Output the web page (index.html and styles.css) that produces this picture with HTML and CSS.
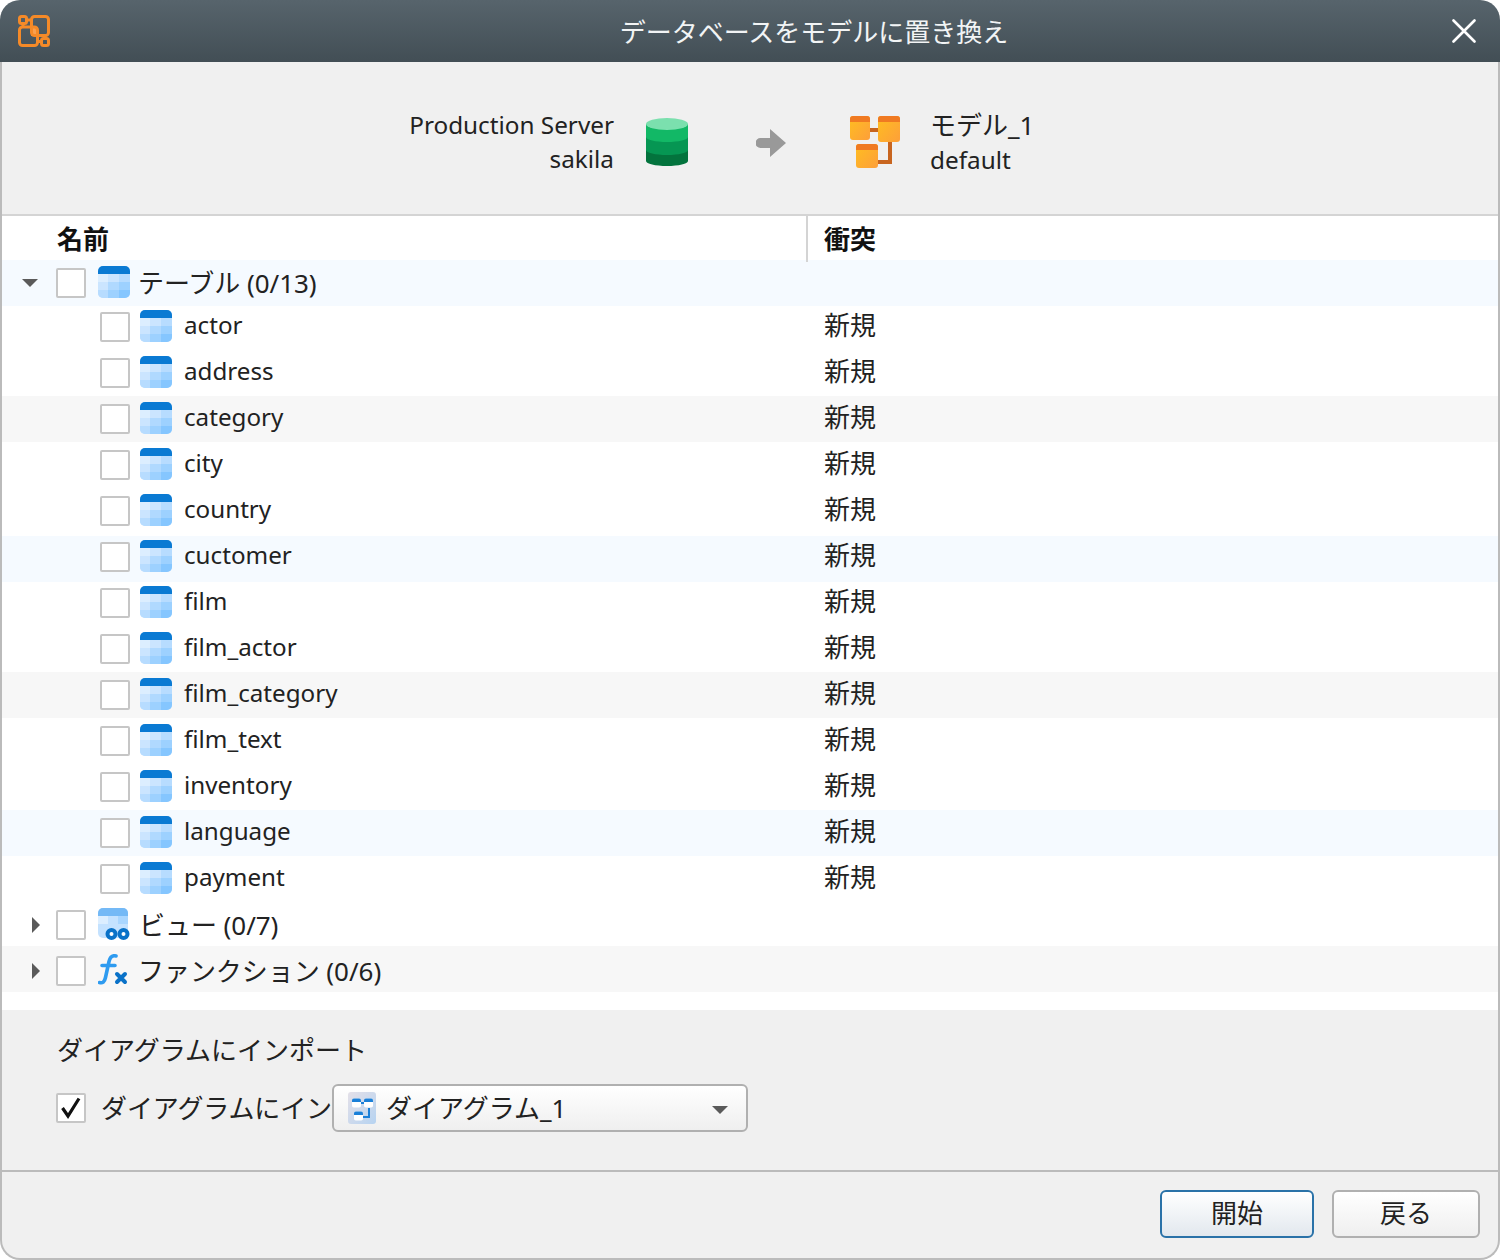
FILE: index.html
```html
<!DOCTYPE html>
<html lang="ja">
<head>
    <meta charset="UTF-8">
    <title>データベースをモデルに置き換え</title>
    <link rel="stylesheet" href="styles.css">
</head>
<body>
    <svg class="defs" width="0" height="0">
        <defs>
            <linearGradient id="gold" x1="0" y1="0" x2="1" y2="1">
                <stop offset="0" stop-color="#ffbe20"/>
                <stop offset="1" stop-color="#fd9f3a"/>
            </linearGradient>
            <clipPath id="tc"><rect width="32" height="32" rx="5"/></clipPath>
            <clipPath id="vc"><rect width="30" height="30" rx="5"/></clipPath>
            <symbol id="table" viewBox="0 0 32 32">
                <g clip-path="url(#tc)">
                    <rect width="32" height="32" fill="#c4e2ff"/>
                    <rect width="32" height="8" fill="#0a7ad3"/>
                    <rect y="8" width="10" height="8" fill="#dceeff"/>
                    <rect x="10" y="8" width="11" height="8" fill="#cbe5ff"/>
                    <rect x="21" y="8" width="11" height="8" fill="#b7dcff"/>
                    <rect y="16" width="10" height="8" fill="#cbe5ff"/>
                    <rect x="10" y="16" width="11" height="8" fill="#b0d9ff"/>
                    <rect x="21" y="16" width="11" height="8" fill="#9dd1ff"/>
                    <rect y="24" width="10" height="8" fill="#b7dcff"/>
                    <rect x="10" y="24" width="11" height="8" fill="#9dd1ff"/>
                    <rect x="21" y="24" width="11" height="8" fill="#85c6ff"/>
                </g>
            </symbol>
            <symbol id="mini" viewBox="0 0 10 10">
                <rect width="10" height="10" rx="2" fill="#fff"/>
                <path d="M0 4V2a2 2 0 0 1 2-2h6a2 2 0 0 1 2 2v2z" fill="#1b80d8"/>
            </symbol>
        </defs>
    </svg>

    <div class="window">
        <header class="title-bar">
            <svg class="logo" width="32" height="32" viewBox="0 0 32 32" fill="none" stroke="#f58a28" stroke-width="3">
                <rect x="13" y="12" width="7" height="9" fill="#f9a050" stroke="none"/>
                <rect x="1.500" y="1.500" width="7" height="7" rx="2"/>
                <rect x="13.500" y="1.500" width="17" height="19" rx="3"/>
                <rect x="1.500" y="12" width="18" height="18.500" rx="3"/>
                <rect x="23.500" y="23.500" width="7" height="7" rx="2"/>
                <path d="M8.500 5h5M5 8.500V12M19.500 26.500h4M27 20.500v3"/>
            </svg>
            <div class="title">データベースをモデルに置き換え</div>
            <svg class="close" width="24" height="24" viewBox="0 0 24 24" stroke="#fff" stroke-width="2.600" stroke-linecap="round">
                <path d="M1.500 1.500l21 21M22.500 1.500l-21 21"/>
            </svg>
        </header>

        <div class="content">
            <section class="summary">
                <div class="source">Production Server<br>sakila</div>
                <svg class="db-icon" width="42" height="48" viewBox="0 0 42 48">
                    <path d="M0 6h42v37c0 2.800-9.400 5-21 5S0 45.800 0 43z" fill="#03733d"/>
                    <path d="M0 6h42v26c0 2.800-9.400 5-21 5S0 34.800 0 32z" fill="#069653"/>
                    <path d="M0 6h42v13c0 2.800-9.400 5-21 5S0 21.800 0 19z" fill="#12b866"/>
                    <ellipse cx="21" cy="6" rx="21" ry="6" fill="#7be0ae"/>
                </svg>
                <svg class="arrow-icon" width="30" height="28" viewBox="0 0 30 28">
                    <path d="M14 0l16 14-16 14V19H4.500a5 5 0 0 1 0-10H14z" fill="#999"/>
                </svg>
                <svg class="model-icon" width="50" height="52" viewBox="0 0 50 52">
                    <path d="M20 14h8M40 26v20H28" fill="none" stroke="#c8651f" stroke-width="4"/>
                    <rect width="20" height="24" rx="3" fill="url(#gold)"/>
                    <path d="M0 6V3a3 3 0 0 1 3-3h14a3 3 0 0 1 3 3v3z" fill="#f07a22"/>
                    <rect x="28" width="22" height="26" rx="3" fill="url(#gold)"/>
                    <path d="M28 6V3a3 3 0 0 1 3-3h16a3 3 0 0 1 3 3v3z" fill="#f07a22"/>
                    <rect x="6" y="28" width="22" height="24" rx="3" fill="url(#gold)"/>
                    <path d="M6 34v-3a3 3 0 0 1 3-3h16a3 3 0 0 1 3 3v3z" fill="#f07a22"/>
                </svg>
                <div class="target">モデル_1<br><span class="latin">default</span></div>
            </section>

            <section class="tree">
                <div class="tree-head">
                    <div class="col-name">名前</div>
                    <div class="col-conflict">衝突</div>
                </div>

                <div class="row group tint-blue">
                    <div class="cell-name">
                        <span class="caret-down"></span>
                        <span class="check"></span>
                        <svg class="icon" width="32" height="32"><use href="#table"/></svg>
                        <span class="group-label">テーブル (0/13)</span>
                    </div>
                </div>

                <div class="row h44 up">
                    <div class="cell-name child"><span class="check"></span><svg class="icon" width="32" height="32"><use href="#table"/></svg><span class="label">actor</span></div>
                    <div class="cell-conflict">新規</div>
                </div>
                <div class="row">
                    <div class="cell-name child"><span class="check"></span><svg class="icon" width="32" height="32"><use href="#table"/></svg><span class="label">address</span></div>
                    <div class="cell-conflict">新規</div>
                </div>
                <div class="row tint-gray">
                    <div class="cell-name child"><span class="check"></span><svg class="icon" width="32" height="32"><use href="#table"/></svg><span class="label">category</span></div>
                    <div class="cell-conflict">新規</div>
                </div>
                <div class="row">
                    <div class="cell-name child"><span class="check"></span><svg class="icon" width="32" height="32"><use href="#table"/></svg><span class="label">city</span></div>
                    <div class="cell-conflict">新規</div>
                </div>
                <div class="row h48">
                    <div class="cell-name child"><span class="check"></span><svg class="icon" width="32" height="32"><use href="#table"/></svg><span class="label">country</span></div>
                    <div class="cell-conflict">新規</div>
                </div>
                <div class="row up tint-blue">
                    <div class="cell-name child"><span class="check"></span><svg class="icon" width="32" height="32"><use href="#table"/></svg><span class="label">cuctomer</span></div>
                    <div class="cell-conflict">新規</div>
                </div>
                <div class="row h44 up">
                    <div class="cell-name child"><span class="check"></span><svg class="icon" width="32" height="32"><use href="#table"/></svg><span class="label">film</span></div>
                    <div class="cell-conflict">新規</div>
                </div>
                <div class="row">
                    <div class="cell-name child"><span class="check"></span><svg class="icon" width="32" height="32"><use href="#table"/></svg><span class="label">film_actor</span></div>
                    <div class="cell-conflict">新規</div>
                </div>
                <div class="row tint-gray">
                    <div class="cell-name child"><span class="check"></span><svg class="icon" width="32" height="32"><use href="#table"/></svg><span class="label">film_category</span></div>
                    <div class="cell-conflict">新規</div>
                </div>
                <div class="row">
                    <div class="cell-name child"><span class="check"></span><svg class="icon" width="32" height="32"><use href="#table"/></svg><span class="label">film_text</span></div>
                    <div class="cell-conflict">新規</div>
                </div>
                <div class="row">
                    <div class="cell-name child"><span class="check"></span><svg class="icon" width="32" height="32"><use href="#table"/></svg><span class="label">inventory</span></div>
                    <div class="cell-conflict">新規</div>
                </div>
                <div class="row tint-blue">
                    <div class="cell-name child"><span class="check"></span><svg class="icon" width="32" height="32"><use href="#table"/></svg><span class="label">language</span></div>
                    <div class="cell-conflict">新規</div>
                </div>
                <div class="row">
                    <div class="cell-name child"><span class="check"></span><svg class="icon" width="32" height="32"><use href="#table"/></svg><span class="label">payment</span></div>
                    <div class="cell-conflict">新規</div>
                </div>

                <div class="row group h44">
                    <div class="cell-name">
                        <span class="caret-right"></span>
                        <span class="check"></span>
                        <svg class="icon" width="32" height="32" viewBox="0 0 32 32">
                            <g clip-path="url(#vc)">
                                <rect width="30" height="30" fill="#c4e2ff"/>
                                <rect width="30" height="8" fill="#74b9f6"/>
                                <rect y="8" width="10" height="8" fill="#dceeff"/>
                                <rect x="20" y="8" width="10" height="8" fill="#a9d6ff"/>
                            </g>
                            <g fill="#fff" stroke="#0a72c8" stroke-width="4">
                                <circle cx="13.500" cy="26" r="4"/>
                                <circle cx="25.500" cy="26" r="4"/>
                            </g>
                        </svg>
                        <span class="group-label view-label">ビュー (0/7)</span>
                    </div>
                </div>
                <div class="row group down tint-gray">
                    <div class="cell-name">
                        <span class="caret-right"></span>
                        <span class="check"></span>
                        <svg class="icon" width="32" height="32" viewBox="0 0 32 32" fill="none" stroke-linecap="round">
                            <path d="M1.500 28.500c3 1 5-.5 6-5l3.500-16c1-4 3-6.500 7-5.500M4 11.500h13" stroke="#2e9bf0" stroke-width="3.600"/>
                            <path d="M19 20l8 8M27 20l-8 8" stroke="#0a72c8" stroke-width="4"/>
                        </svg>
                        <span class="group-label">ファンクション (0/6)</span>
                    </div>
                </div>
            </section>

            <section class="import">
                <div class="import-title">ダイアグラムにインポート</div>
                <div class="import-row">
                    <span class="check checked">
                        <svg width="24" height="24" viewBox="0 0 24 24" fill="none" stroke="#111" stroke-width="3.200"><path d="M3.500 12l5.500 8L20 2.500"/></svg>
                    </span>
                    <div class="import-label">ダイアグラムにイン</div>
                    <div class="combo">
                        <svg class="combo-icon" width="28" height="32" viewBox="0 0 28 32">
                            <defs>
                                <linearGradient id="chip" x1="0" y1="0" x2="1" y2="1">
                                    <stop offset="0" stop-color="#e4e0e8"/>
                                    <stop offset="1" stop-color="#b6d3f1"/>
                                </linearGradient>
                            </defs>
                            <rect width="28" height="32" rx="3" fill="url(#chip)"/>
                            <path d="M13 11h4M21 16v9h-8" fill="none" stroke="#1b80d8" stroke-width="2"/>
                            <use href="#mini" x="4" y="6" width="9" height="10"/>
                            <use href="#mini" x="16" y="6" width="9" height="10"/>
                            <use href="#mini" x="6" y="19" width="9" height="10"/>
                        </svg>
                        <span class="combo-text">ダイアグラム_1</span>
                        <span class="caret-down combo-caret"></span>
                    </div>
                </div>
            </section>

            <footer class="actions">
                <button type="button" class="btn btn-primary">開始</button>
                <button type="button" class="btn btn-back">戻る</button>
            </footer>
        </div>
    </div>
</body>
</html>
```

FILE: styles.css
```css
* {
    box-sizing: border-box;
}

html,
body {
    margin: 0;
    padding: 0;
    background: #ffffff;
}

body {
    font-family: "Noto Sans", "Noto Sans CJK JP", sans-serif;
    font-size: 26px;
    color: #222;
}

.defs {
    position: absolute;
}

.window {
    width: 1500px;
    height: 1260px;
    display: flex;
    flex-direction: column;
}

/* title bar */
.title-bar {
    height: 62px;
    flex: none;
    display: flex;
    align-items: center;
    padding: 0 24px 0 18px;
    background: linear-gradient(#57646c, #424e55);
    border-radius: 20px 20px 0 0;
}

.logo,
.close {
    flex: none;
}

.title {
    flex: 1;
    padding: 2px 0 0 126px;
    text-align: center;
    color: #f2f4f5;
    line-height: 30px;
}

.content {
    flex: 1;
    display: flex;
    flex-direction: column;
    min-height: 0;
    background: #f0f0f0;
    border: 2px solid #bbbbbb;
    border-top: none;
    border-radius: 0 0 20px 20px;
    overflow: hidden;
}

/* source -> target */
.summary {
    height: 154px;
    flex: none;
    display: flex;
    align-items: center;
    padding-top: 8px;
    border-bottom: 2px solid #d4d4d4;
    line-height: 34px;
}

.source {
    width: 612px;
    text-align: right;
    flex: none;
    font-size: 24.3px;
}

.latin {
    font-size: 24.3px;
    line-height: 30px;
}

.db-icon {
    margin-left: 32px;
    flex: none;
}

.arrow-icon {
    margin: 2px 0 0 68px;
    flex: none;
}

.model-icon {
    margin-left: 64px;
    flex: none;
}

.target {
    margin-left: 30px;
}

/* tree */
.tree {
    height: 794px;
    flex: none;
    background: #ffffff;
}

.tree-head {
    position: relative;
    height: 46px;
    margin-bottom: -2px;
    display: flex;
    font-weight: 700;
    color: #111;
}

.col-name {
    width: 804px;
    padding-left: 55px;
    line-height: 46px;
}

.col-conflict {
    padding-left: 16px;
    line-height: 46px;
    border-left: 2px solid #d4d4d4;
}

.row {
    height: 46px;
    display: flex;
    padding-top: 8px;
}

.row.h44 {
    height: 44px;
}

.row.h48 {
    height: 48px;
}

.row.up {
    padding-top: 6px;
}

.row.down {
    padding-top: 10px;
}

.tint-blue {
    background: #f5faff;
}

.tint-gray {
    background: #f7f7f7;
}

.cell-name {
    width: 822px;
    flex: none;
    display: flex;
    align-items: flex-start;
    height: 30px;
}

.cell-name.child {
    padding-left: 98px;
}

.cell-conflict {
    line-height: 30px;
    margin-top: -2px;
}

.group .cell-name {
    padding-left: 54px;
    position: relative;
}

.check {
    width: 30px;
    height: 30px;
    flex: none;
    display: flex;
    align-items: center;
    justify-content: center;
    background: #ffffff;
    border: 2px solid #c6c6c6;
    border-radius: 2px;
}

.icon {
    flex: none;
    margin: -2px 0 0 10px;
}

.group .icon {
    margin-left: 12px;
}

.label {
    margin: -2px 0 0 12px;
    line-height: 30px;
    font-size: 24.2px;
}

.group-label {
    margin-left: 8px;
    line-height: 30px;
    letter-spacing: -0.05px;
}

.view-label {
    margin-left: 9px;
}

.caret-down {
    width: 0;
    height: 0;
    border-left: 8px solid transparent;
    border-right: 8px solid transparent;
    border-top: 8px solid #5a5a5a;
}

.group .caret-down {
    position: absolute;
    left: 20px;
    top: 11px;
}

.caret-right {
    position: absolute;
    left: 30px;
    top: 7px;
    width: 0;
    height: 0;
    border-top: 8px solid transparent;
    border-bottom: 8px solid transparent;
    border-left: 8px solid #5a5a5a;
}

/* import to diagram */
.import {
    height: 162px;
    flex: none;
    padding: 22px 0 0 54px;
    border-bottom: 2px solid #bbbbbb;
}

.import-title {
    line-height: 36px;
    padding-left: 1px;
}

.import-row {
    display: flex;
    align-items: center;
    margin-top: 16px;
}

.import-label {
    width: 231px;
    margin: -2px 0 0 15px;
    white-space: nowrap;
    letter-spacing: -0.1px;
}

.combo {
    width: 416px;
    height: 48px;
    flex: none;
    display: flex;
    align-items: center;
    padding-left: 14px;
    background: linear-gradient(#ffffff, #efefef);
    border: 2px solid #b0b0b0;
    border-radius: 6px;
}

.combo-icon {
    flex: none;
}

.combo-text {
    margin: -2px 0 0 10px;
    flex: 1;
}

.combo-caret {
    margin: 4px 18px 0 0;
}

/* footer buttons */
.actions {
    flex: 1;
    display: flex;
    justify-content: flex-end;
    align-items: flex-start;
    gap: 18px;
    padding: 18px 18px 0 0;
}

.btn {
    height: 48px;
    font: inherit;
    line-height: 42px;
    color: #222;
    padding: 0 0 2px;
    border-radius: 6px;
    background: linear-gradient(#ffffff, #efefef);
    border: 2px solid #b0b0b0;
}

.btn-primary {
    width: 154px;
    background: linear-gradient(#ffffff, #e2e8ee);
    border-color: #2a72a8;
}

.btn-back {
    width: 148px;
}
```
